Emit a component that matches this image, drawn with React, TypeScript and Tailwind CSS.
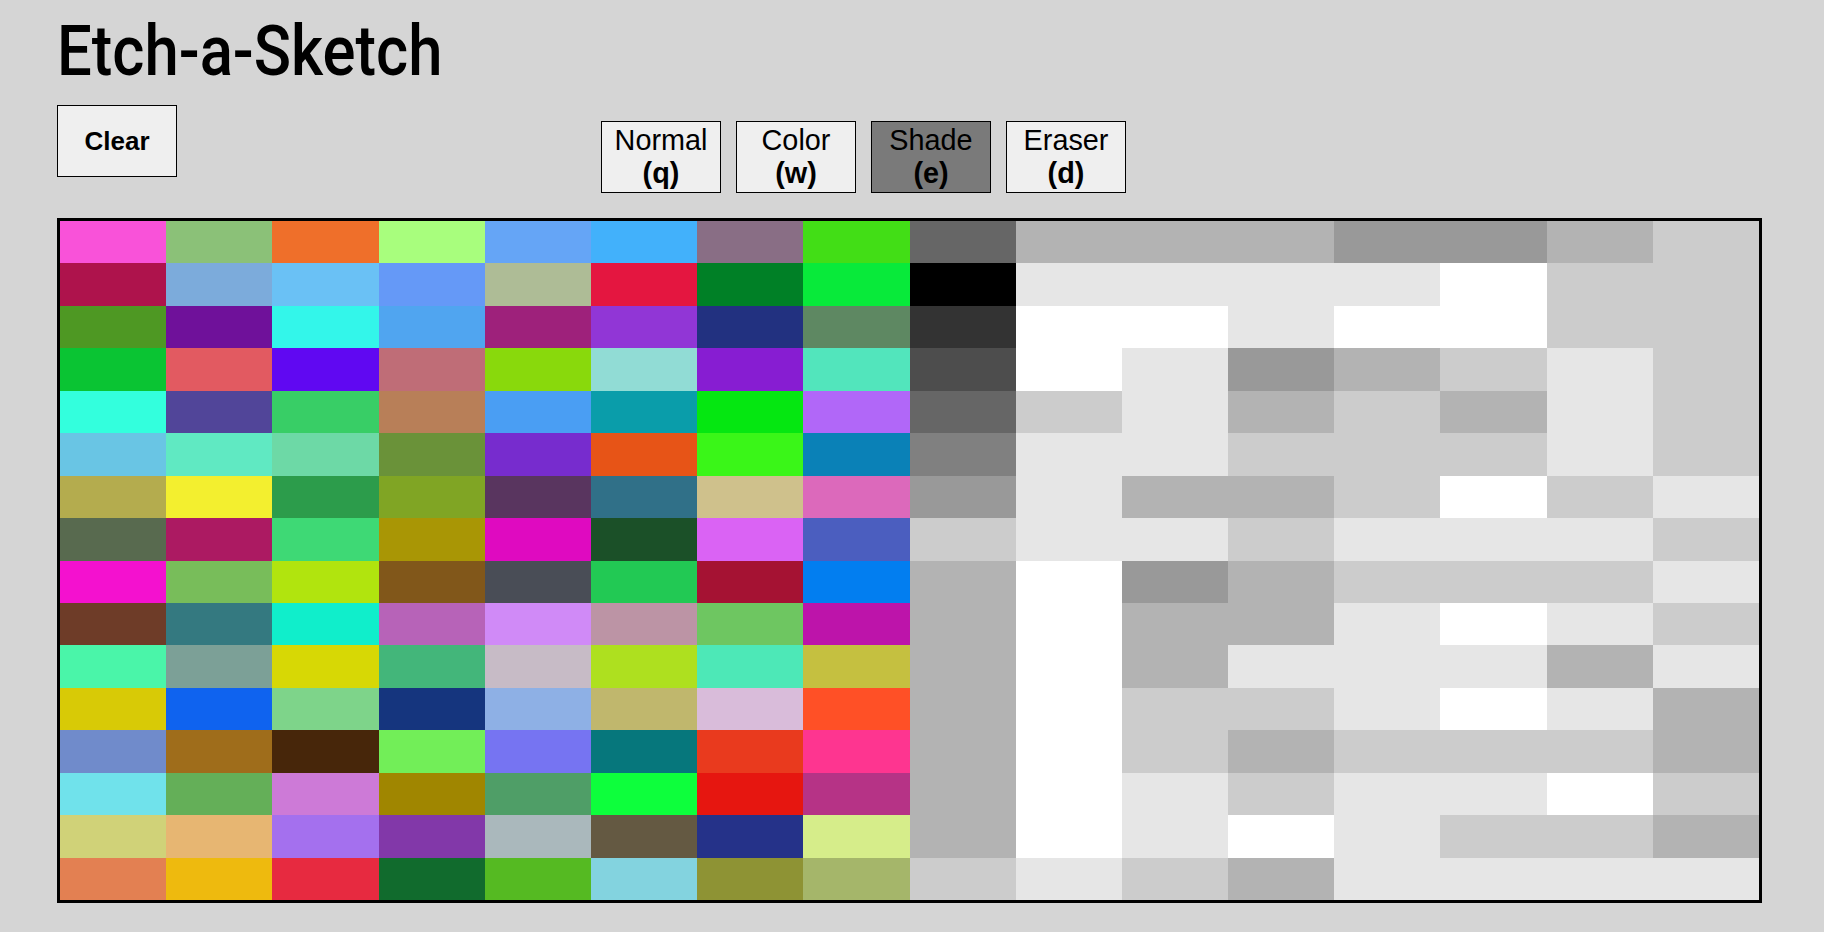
const colors = [
  ['#f952d9', '#8bc178', '#ef6f2a', '#a8fe7d', '#65a5f6', '#42b1fb', '#896e85', '#42de16', '#666666', '#b3b3b3', '#b3b3b3', '#b3b3b3', '#999999', '#999999', '#b3b3b3', '#cccccc'],
  ['#ae134c', '#7cabdb', '#6ac1f5', '#6599f7', '#aebc96', '#e41640', '#008026', '#08ea3a', '#000000', '#e6e6e6', '#e6e6e6', '#e6e6e6', '#e6e6e6', '#ffffff', '#cccccc', '#cccccc'],
  ['#4e9823', '#6f119a', '#33f6ea', '#50a5f0', '#9e217b', '#9136d6', '#223180', '#5e8862', '#333333', '#ffffff', '#ffffff', '#e6e6e6', '#ffffff', '#ffffff', '#cccccc', '#cccccc'],
  ['#0ac433', '#e25a61', '#6008f2', '#bf6d77', '#89d90c', '#91dcd5', '#871dd2', '#52e5bc', '#4d4d4d', '#ffffff', '#e6e6e6', '#999999', '#b3b3b3', '#cccccc', '#e6e6e6', '#cccccc'],
  ['#33ffdd', '#514599', '#38ce66', '#b87f58', '#4a9ef3', '#0a9daa', '#05e711', '#b167f8', '#666666', '#cccccc', '#e6e6e6', '#b3b3b3', '#cccccc', '#b3b3b3', '#e6e6e6', '#cccccc'],
  ['#69c5e4', '#60e9c2', '#6dd9a6', '#6a9239', '#772cce', '#e75417', '#3af618', '#0a81b7', '#808080', '#e6e6e6', '#e6e6e6', '#cccccc', '#cccccc', '#cccccc', '#e6e6e6', '#cccccc'],
  ['#b4ac4e', '#f3ef2f', '#2c9c4b', '#80a524', '#59355f', '#307088', '#cfc18c', '#dc69bb', '#999999', '#e6e6e6', '#b3b3b3', '#b3b3b3', '#cccccc', '#ffffff', '#cccccc', '#e6e6e6'],
  ['#586a4f', '#ac1a62', '#3ed975', '#a99605', '#df0ac0', '#1b5028', '#da63f4', '#4b5ebf', '#cccccc', '#e6e6e6', '#e6e6e6', '#cccccc', '#e6e6e6', '#e6e6e6', '#e6e6e6', '#cccccc'],
  ['#f411cf', '#78bd5a', '#b1e40e', '#81571a', '#494d56', '#22c954', '#a51233', '#027ef0', '#b3b3b3', '#ffffff', '#999999', '#b3b3b3', '#cccccc', '#cccccc', '#cccccc', '#e6e6e6'],
  ['#6e3c28', '#347980', '#10eecb', '#b763b8', '#d08af7', '#bc94a5', '#6ec661', '#bd14aa', '#b3b3b3', '#ffffff', '#b3b3b3', '#b3b3b3', '#e6e6e6', '#ffffff', '#e6e6e6', '#cccccc'],
  ['#4af5a9', '#7ca097', '#d7d805', '#43b67a', '#c7bbc6', '#aee01f', '#4de8b7', '#c5c040', '#b3b3b3', '#ffffff', '#b3b3b3', '#e6e6e6', '#e6e6e6', '#e6e6e6', '#b3b3b3', '#e6e6e6'],
  ['#d8ca06', '#0f63ef', '#7ed48a', '#15357e', '#8eb0e5', '#c0b76d', '#d9bcda', '#ff5026', '#b3b3b3', '#ffffff', '#cccccc', '#cccccc', '#e6e6e6', '#ffffff', '#e6e6e6', '#b3b3b3'],
  ['#708bcb', '#9f6d1b', '#47260a', '#72ee58', '#7674f2', '#06777c', '#e93a1e', '#fe3590', '#b3b3b3', '#ffffff', '#cccccc', '#b3b3b3', '#cccccc', '#cccccc', '#cccccc', '#b3b3b3'],
  ['#70e2eb', '#64af58', '#cd7ad7', '#a08600', '#4f9e67', '#0dff3c', '#e61610', '#b63386', '#b3b3b3', '#ffffff', '#e6e6e6', '#cccccc', '#e6e6e6', '#e6e6e6', '#ffffff', '#cccccc'],
  ['#d0d278', '#e7b672', '#a470ee', '#8238a9', '#aab8bc', '#645942', '#253289', '#d6ed8a', '#b3b3b3', '#ffffff', '#e6e6e6', '#ffffff', '#e6e6e6', '#cccccc', '#cccccc', '#b3b3b3'],
  ['#e38052', '#eeba0e', '#e72a40', '#116b2d', '#55ba22', '#83d3df', '#8e9334', '#a5b66a', '#cccccc', '#e6e6e6', '#cccccc', '#b3b3b3', '#e6e6e6', '#e6e6e6', '#e6e6e6', '#e6e6e6'],
];

const modes = [
  { label: 'Normal', key: 'q' },
  { label: 'Color', key: 'w' },
  { label: 'Shade', key: 'e', active: true },
  { label: 'Eraser', key: 'd' },
];

const App = () => {
  return (
    <main className="min-h-screen bg-[#d5d5d5] pl-[57px] pt-[13px] font-['Liberation_Sans',sans-serif] text-black">
      <h1 className="w-fit origin-left scale-x-[0.88] font-['Roboto',sans-serif] text-[70px] font-medium leading-[76px]">
        Etch-a-Sketch
      </h1>
      <div className="mt-[16px] flex items-start">
        <button className="h-[72px] w-[120px] border border-black bg-[#efefef] text-[26px] font-bold">Clear</button>
        <div className="ml-[424px] mt-4 flex gap-[15px]">
          {modes.map((mode) => (
            <button
              key={mode.key}
              className={
                mode.active
                  ? 'h-[72px] w-[120px] border border-black bg-[#7a7a7a] text-[28.8px] leading-[33px]'
                  : 'h-[72px] w-[120px] border border-black bg-[#efefef] text-[28.8px] leading-[33px]'
              }
            >
              {mode.label}
              <br />
              <b>({mode.key})</b>
            </button>
          ))}
        </div>
      </div>
      <div className="mt-[25px] grid h-[685px] w-[1705px] grid-cols-[repeat(16,1fr)] grid-rows-[repeat(16,1fr)] border-[3px] border-black">
        {colors.flat().map((color, index) => (
          <div key={index} style={{ backgroundColor: color }} />
        ))}
      </div>
    </main>
  );
};

export default App;
